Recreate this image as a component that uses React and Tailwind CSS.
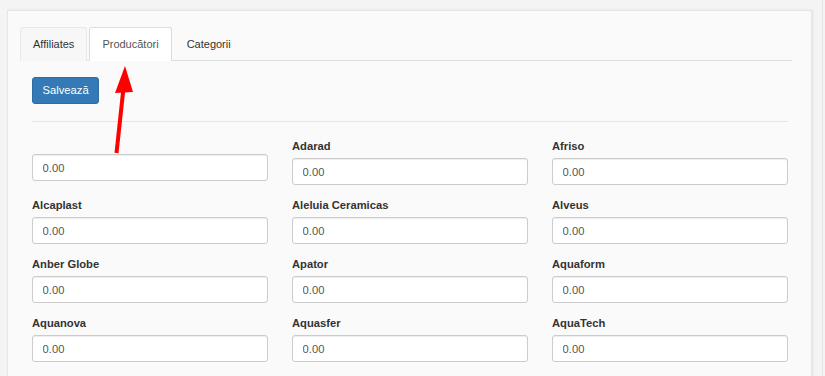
import React from 'react';

const fields = [
  { name: '', first: true },
  { name: 'Adarad' },
  { name: 'Afriso' },
  { name: 'Alcaplast' },
  { name: 'Aleluia Ceramicas' },
  { name: 'Alveus' },
  { name: 'Anber Globe' },
  { name: 'Apator' },
  { name: 'Aquaform' },
  { name: 'Aquanova' },
  { name: 'Aquasfer' },
  { name: 'AquaTech' },
];

function Field({ name, first }) {
  return (
    <div className="mb-[12px]">
      {first ? (
        <div className="h-[12px] mb-[4px]" />
      ) : (
        <label className="block h-[16px] leading-[16px] mb-[4px] text-[11.2px] font-bold text-[#333]">
          {name}
        </label>
      )}
      <input
        type="text"
        defaultValue="0.00"
        className="block w-full h-[27px] px-[9.6px] bg-white border border-[#ccc] rounded-[3px] text-[11.2px] text-[#555] shadow-[inset_0_1px_1px_rgba(0,0,0,0.075)] outline-none"
      />
    </div>
  );
}

export default function App() {
  const tabs = ['Affiliates', 'Producători', 'Categorii'];
  const active = 1;

  return (
    <div
      className="relative w-[825px] h-[376px] overflow-hidden bg-[#f4f4f4]"
      style={{ fontFamily: '"Liberation Sans", Arial, sans-serif' }}
    >
      <div className="flex h-full">
        <div className="ml-[7px] mt-[10px] w-[805px] h-[400px] bg-[#fafafa] border border-[#e6e6e6] shadow-[1px_0_2px_rgba(0,0,0,0.08)] pt-[16px] pl-[12px] pr-[19px]">
          {/* tabs */}
          <div className="flex gap-[2px] border-b border-[#ddd] h-[34px]">
            {tabs.map((t, i) => (
              <div
                key={t}
                className={`h-[34px] px-[12px] leading-[32px] text-[11px] rounded-t-[3px] border ${
                  i === active
                    ? 'bg-white border-[#ddd] border-b-white text-[#555]'
                    : i === 0
                    ? 'h-[33px] bg-[#f7f7f7] border-[#e8e8e8] border-b-0 text-[#333]'
                    : 'border-transparent text-[#333]'
                }`}
              >
                {t}
              </div>
            ))}
          </div>

          <div className="pt-[16px] pl-[12px] w-[768px]">
            <button className="h-[27px] px-[9.6px] bg-[#337ab7] border border-[#2e6da4] rounded-[3px] text-white text-[11.2px]">
              Salvează
            </button>
            <div className="w-[756px] border-t border-[#e5e5e5] mt-[17px] mb-[16px]" />

            <div className="grid grid-cols-3 gap-x-[24px] w-[756px]">
              {fields.map((f, i) => (
                <Field key={i} {...f} />
              ))}
            </div>
          </div>
        </div>
        <div className="ml-[10px] w-px h-full bg-[#e3e3e3]" />
      </div>

      {/* red annotation arrow */}
      <svg className="absolute left-0 top-0 pointer-events-none" width="825" height="376">
        <line x1="116.5" y1="153" x2="123.5" y2="88" stroke="#ff0000" strokeWidth="4" />
        <polygon points="125,66 115,93 133,92" fill="#ff0000" />
      </svg>
    </div>
  );
}
